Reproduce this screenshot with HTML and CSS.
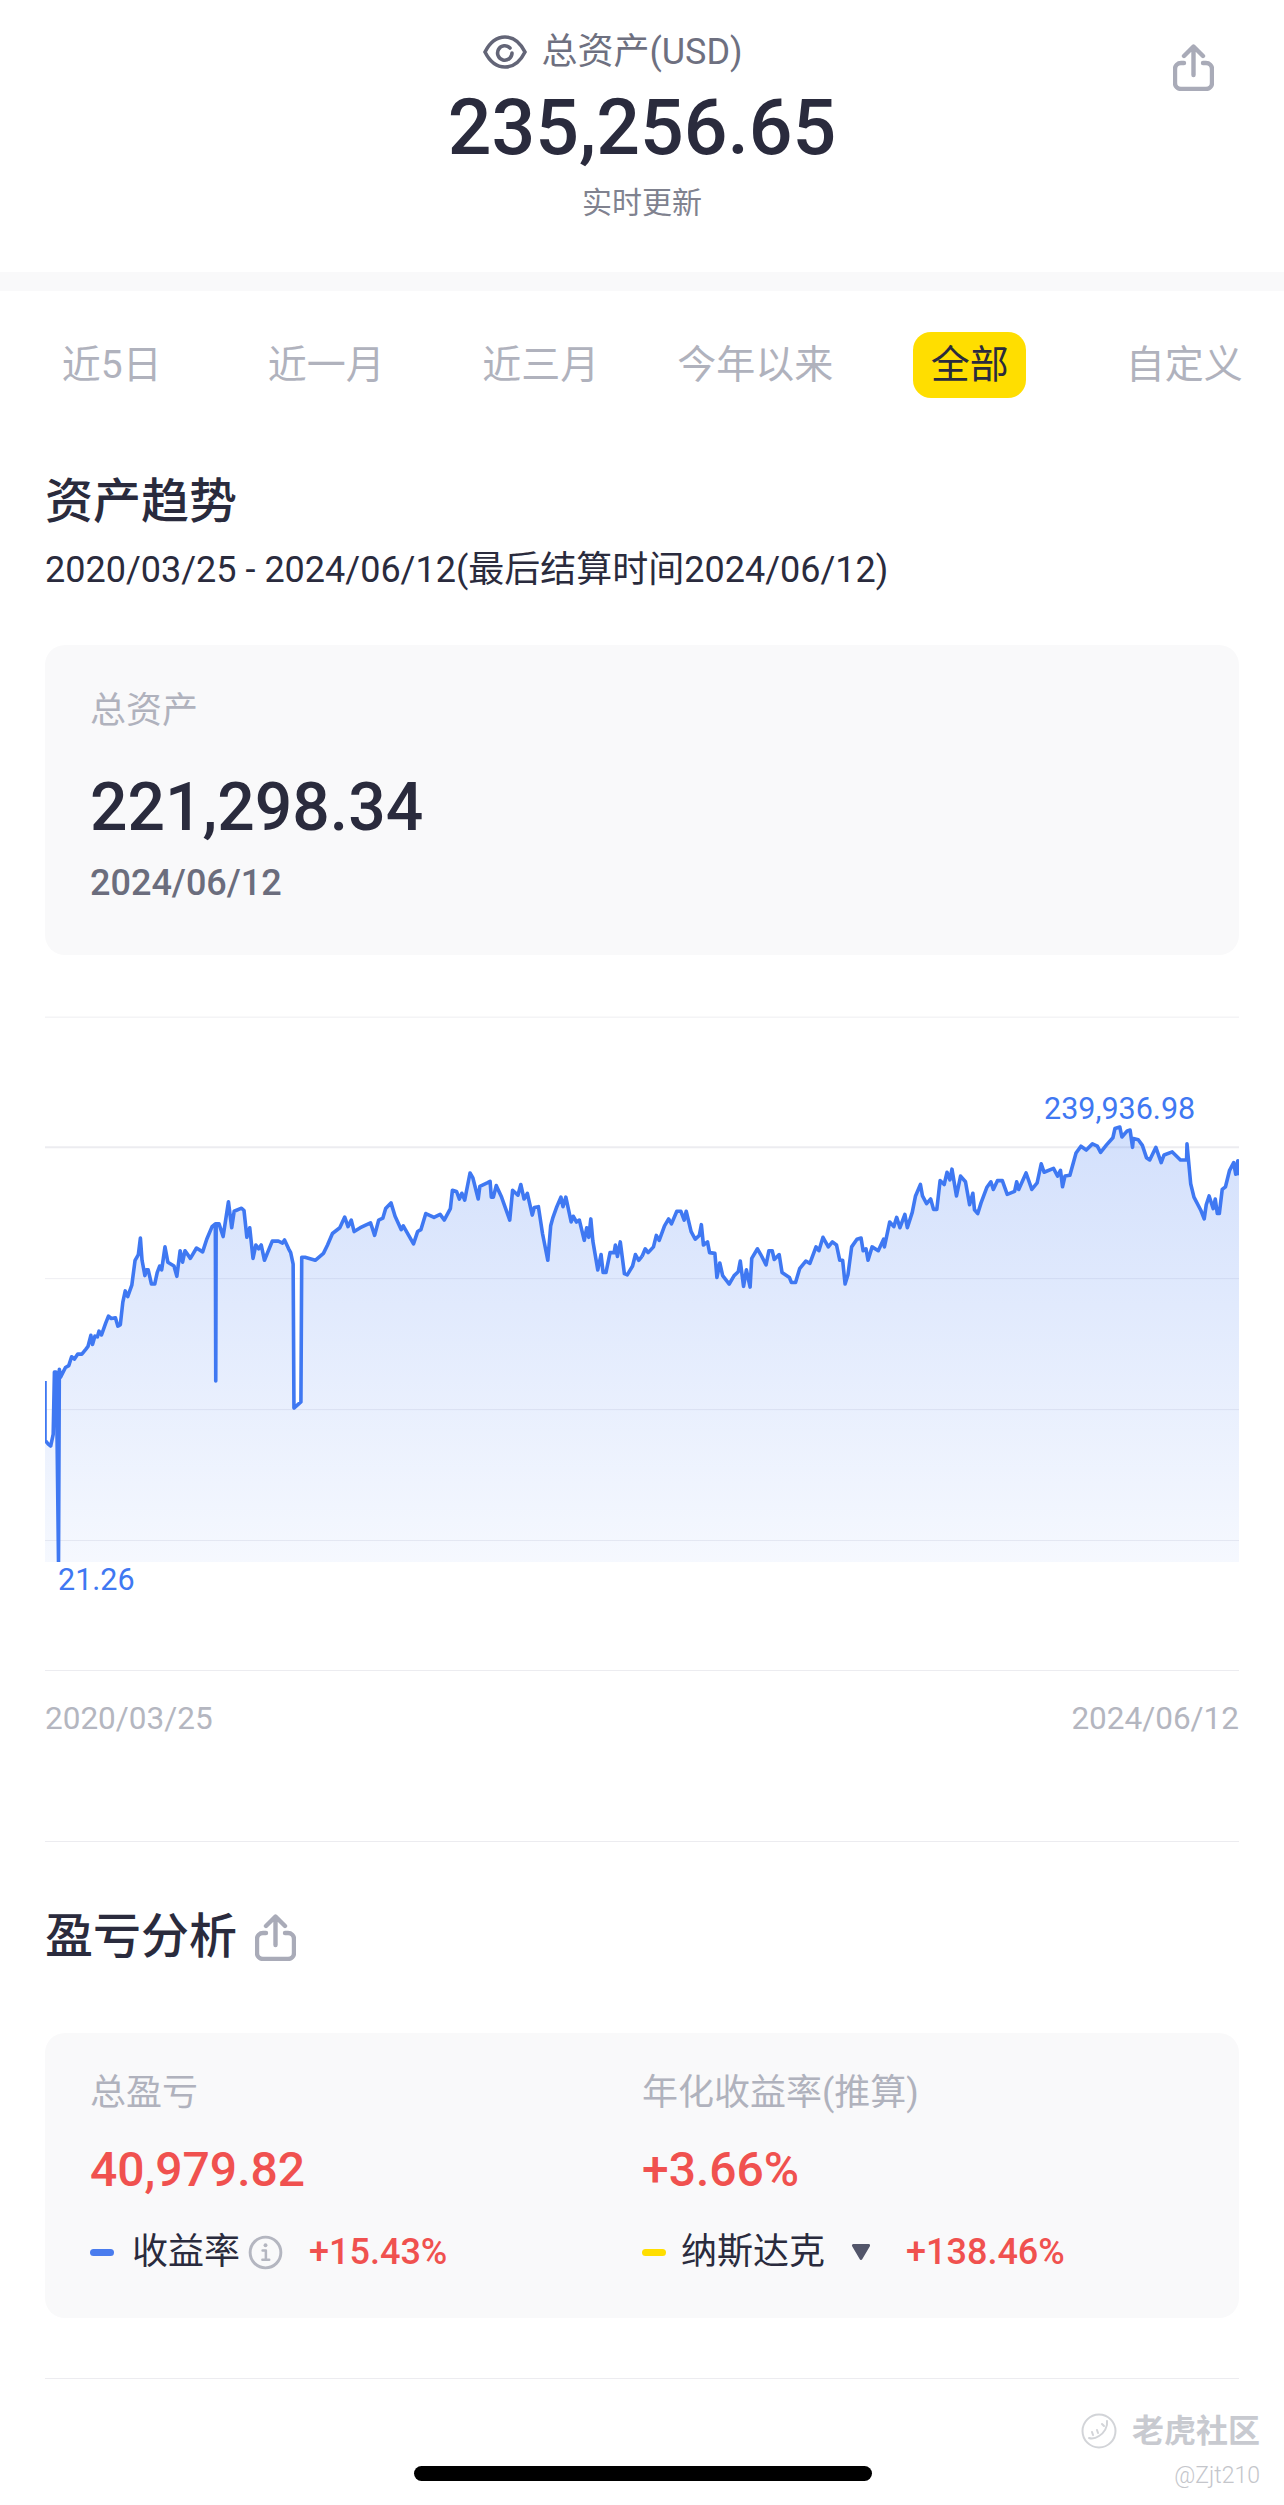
FILE: index.html
```html
<!DOCTYPE html>
<html lang="zh-CN">
<head>
    <meta charset="UTF-8">
    <meta name="viewport" content="width=device-width, initial-scale=1.0">
    <title>总资产</title>
    <link rel="stylesheet" href="styles.css">
</head>
<body>
    <div class="page">
        <!-- Total assets header -->
        <header class="header">
            <div></div>
            <div class="summary">
                <div class="summary-label">
                    <svg class="eye-icon" viewBox="0 0 44 34" fill="none" stroke="#636577" stroke-width="3.6" stroke-linecap="round">
                        <path d="M2 17C7 7 14 2 22 2s15 5 20 15c-5 10-12 15-20 15S7 27 2 17z"/>
                        <path d="M27 13a7.2 7.2 0 1 0 2 5"/>
                    </svg>
                    <span>总资产(USD)</span>
                    <span></span>
                </div>
                <div class="summary-value">235,256.65</div>
                <div class="summary-note">实时更新</div>
            </div>
            <svg class="share-icon share-top" viewBox="0 0 41 47" fill="none" stroke="#a9abb8" stroke-width="4.4" stroke-linecap="round" stroke-linejoin="round">
                <path d="M20.5 3V31M11 12l9.5-9.5L30 12"/>
                <path d="M11 19H8a6 6 0 0 0-6 6v14a6 6 0 0 0 6 6h25a6 6 0 0 0 6-6V25a6 6 0 0 0-6-6h-3"/>
            </svg>
        </header>
        <div class="band"></div>

        <!-- Time range tabs -->
        <nav class="tabs">
            <a class="tab">近5日</a>
            <a class="tab">近一月</a>
            <a class="tab">近三月</a>
            <a class="tab">今年以来</a>
            <a class="tab active">全部</a>
            <a class="tab">自定义</a>
        </nav>

        <main class="content">
            <h2 class="section-title trend-title">资产趋势</h2>
            <p class="date-range">2020/03/25 - 2024/06/12(最后结算时间2024/06/12)</p>

            <div class="card asset-card">
                <div class="card-label">总资产</div>
                <div class="asset-value">221,298.34</div>
                <div class="asset-date">2024/06/12</div>
            </div>

            <div class="chart">
                <svg class="chart-svg" viewBox="110 42 2916 1426" preserveAspectRatio="none">
                    <defs>
                        <linearGradient id="areaFill" gradientUnits="userSpaceOnUse" x1="0" y1="330" x2="0" y2="1468">
                            <stop offset="0" stop-color="#3f78f2" stop-opacity="0.23"/>
                            <stop offset="1" stop-color="#3f78f2" stop-opacity="0.05"/>
                        </linearGradient>
                    </defs>
                    <g class="grid">
                        <line x1="110" x2="3026" y1="45" y2="45"/>
                        <line class="grid-strong" x1="110" x2="3026" y1="385" y2="385"/>
                        <line x1="110" x2="3026" y1="728" y2="728"/>
                        <line x1="110" x2="3026" y1="1070" y2="1070"/>
                        <line x1="110" x2="3026" y1="1412" y2="1412"/>
                    </g>
                    <polygon class="area" points="110,1468 110,1150 118,1160 124,1165 130,1135 133,972 137,972 139,1100 143,1468 145,965 148,985 160,960 168,955 175,932 182,938 190,925 200,925 210,912 215,905 222,876 226,900 232,878 238,880 242,865 248,875 258,845 265,826 272,832 282,830 288,852 294,848 300,790 306,760 312,775 322,745 330,680 338,665 343,622 347,680 354,720 358,705 362,705 370,742 378,742 384,712 390,695 395,705 403,645 410,685 425,695 432,722 440,655 446,685 452,655 465,675 480,648 495,658 505,625 518,592 526,585 527,995 528,585 535,585 545,618 558,527 566,595 572,552 590,544 596,550 603,620 610,595 618,675 625,640 632,650 638,640 646,680 665,630 680,630 690,635 695,627 705,650 710,660 716,690 718,1066 735,1050 737,672 745,672 770,680 790,662 800,640 812,610 830,595 842,567 850,592 858,575 865,605 880,595 905,582 915,615 925,575 935,570 942,545 955,530 965,565 980,600 985,590 1010,637 1020,605 1028,600 1040,558 1060,568 1075,560 1085,575 1100,545 1105,497 1115,500 1122,520 1128,505 1135,523 1148,452 1155,465 1168,520 1172,487 1190,478 1197,474 1200,515 1205,515 1212,485 1225,515 1245,575 1252,497 1265,510 1272,482 1280,520 1288,505 1300,562 1305,542 1315,540 1325,610 1338,680 1345,590 1350,570 1360,540 1370,515 1375,540 1382,515 1395,580 1400,565 1408,580 1415,575 1427,628 1433,595 1438,620 1443,572 1448,630 1460,705 1468,665 1473,712 1480,712 1490,660 1500,660 1503,640 1508,670 1515,632 1525,715 1532,718 1545,695 1552,665 1560,680 1568,670 1568,1468"/>
                    <polyline class="line" points="110,995 110,1150 118,1160 124,1165 130,1135 133,972 137,972 139,1100 143,1468 145,965 148,985 160,960 168,955 175,932 182,938 190,925 200,925 210,912 215,905 222,876 226,900 232,878 238,880 242,865 248,875 258,845 265,826 272,832 282,830 288,852 294,848 300,790 306,760 312,775 322,745 330,680 338,665 343,622 347,680 354,720 358,705 362,705 370,742 378,742 384,712 390,695 395,705 403,645 410,685 425,695 432,722 440,655 446,685 452,655 465,675 480,648 495,658 505,625 518,592 526,585 527,995 528,585 535,585 545,618 558,527 566,595 572,552 590,544 596,550 603,620 610,595 618,675 625,640 632,650 638,640 646,680 665,630 680,630 690,635 695,627 705,650 710,660 716,690 718,1066 735,1050 737,672 745,672 770,680 790,662 800,640 812,610 830,595 842,567 850,592 858,575 865,605 880,595 905,582 915,615 925,575 935,570 942,545 955,530 965,565 980,600 985,590 1010,637 1020,605 1028,600 1040,558 1060,568 1075,560 1085,575 1100,545 1105,497 1115,500 1122,520 1128,505 1135,523 1148,452 1155,465 1168,520 1172,487 1190,478 1197,474 1200,515 1205,515 1212,485 1225,515 1245,575 1252,497 1265,510 1272,482 1280,520 1288,505 1300,562 1305,542 1315,540 1325,610 1338,680 1345,590 1350,570 1360,540 1370,515 1375,540 1382,515 1395,580 1400,565 1408,580 1415,575 1427,628 1433,595 1438,620 1443,572 1448,630 1460,705 1468,665 1473,712 1480,712 1490,660 1500,660 1503,640 1508,670 1515,632 1525,715 1532,718 1545,695 1552,665 1560,680 1568,670"/>
                    <g transform="translate(1568 0)">
                        <polygon class="area" points="0,1468 0,670 8,650 15,660 28,645 35,615 42,628 55,590 65,572 72,585 85,552 95,552 103,575 108,552 120,605 130,625 140,615 145,587 150,640 160,632 165,660 178,662 183,725 190,687 197,720 213,742 225,720 235,710 240,682 248,748 255,705 264,750 268,675 282,650 290,665 303,692 310,655 318,655 323,678 335,665 342,712 360,725 365,738 375,738 385,702 400,682 410,688 425,645 432,655 442,620 455,645 465,632 475,640 483,680 490,680 496,742 503,718 512,645 525,625 535,622 540,655 547,650 552,680 562,645 577,655 590,625 592,645 605,580 615,592 622,568 630,595 642,560 648,595 660,555 668,512 680,482 685,512 695,532 705,520 712,547 720,547 728,472 738,482 745,450 752,470 757,442 768,512 778,460 790,475 800,535 808,505 812,548 820,558 828,530 842,490 852,475 858,495 868,472 880,472 892,508 910,500 915,475 920,495 938,452 952,495 965,478 975,428 982,450 1005,440 1015,460 1022,445 1027,488 1033,460 1045,458 1060,400 1072,382 1085,392 1100,376 1112,382 1120,398 1135,378 1150,360 1155,336 1167,332 1172,358 1185,342 1192,340 1198,385 1200,362 1212,365 1222,380 1232,412 1240,418 1255,385 1268,425 1275,405 1295,397 1315,418 1330,418 1331,376 1340,480 1348,515 1365,550 1373,572 1378,535 1385,512 1395,545 1400,520 1405,558 1410,558 1417,495 1425,488 1435,445 1445,425 1450,455 1455,420 1458,458 1458,1468"/>
                        <polyline class="line" points="0,670 8,650 15,660 28,645 35,615 42,628 55,590 65,572 72,585 85,552 95,552 103,575 108,552 120,605 130,625 140,615 145,587 150,640 160,632 165,660 178,662 183,725 190,687 197,720 213,742 225,720 235,710 240,682 248,748 255,705 264,750 268,675 282,650 290,665 303,692 310,655 318,655 323,678 335,665 342,712 360,725 365,738 375,738 385,702 400,682 410,688 425,645 432,655 442,620 455,645 465,632 475,640 483,680 490,680 496,742 503,718 512,645 525,625 535,622 540,655 547,650 552,680 562,645 577,655 590,625 592,645 605,580 615,592 622,568 630,595 642,560 648,595 660,555 668,512 680,482 685,512 695,532 705,520 712,547 720,547 728,472 738,482 745,450 752,470 757,442 768,512 778,460 790,475 800,535 808,505 812,548 820,558 828,530 842,490 852,475 858,495 868,472 880,472 892,508 910,500 915,475 920,495 938,452 952,495 965,478 975,428 982,450 1005,440 1015,460 1022,445 1027,488 1033,460 1045,458 1060,400 1072,382 1085,392 1100,376 1112,382 1120,398 1135,378 1150,360 1155,336 1167,332 1172,358 1185,342 1192,340 1198,385 1200,362 1212,365 1222,380 1232,412 1240,418 1255,385 1268,425 1275,405 1295,397 1315,418 1330,418 1331,376 1340,480 1348,515 1365,550 1373,572 1378,535 1385,512 1395,545 1400,520 1405,558 1410,558 1417,495 1425,488 1435,445 1445,425 1450,455 1455,420 1458,458"/>
                    </g>
                </svg>
                <span class="chart-label label-high">239,936.98</span>
                <span class="chart-label label-low">21.26</span>
            </div>
            <div class="axis">
                <span>2020/03/25</span>
                <span>2024/06/12</span>
            </div>
            <hr class="divider first-divider">

            <!-- Profit and loss -->
            <h2 class="section-title pnl-title">
                盈亏分析
                <svg class="share-icon" viewBox="0 0 41 47" fill="none" stroke="#a9abb8" stroke-width="4.4" stroke-linecap="round" stroke-linejoin="round">
                    <path d="M20.5 3V31M11 12l9.5-9.5L30 12"/>
                    <path d="M11 19H8a6 6 0 0 0-6 6v14a6 6 0 0 0 6 6h25a6 6 0 0 0 6-6V25a6 6 0 0 0-6-6h-3"/>
                </svg>
            </h2>

            <div class="card pnl-card">
                <div class="pnl-col">
                    <div class="card-label">总盈亏</div>
                    <div class="pnl-value">40,979.82</div>
                    <div class="pnl-row">
                        <i class="dash dash-blue"></i>
                        <span class="pnl-name">收益率</span>
                        <svg class="info-icon" viewBox="0 0 36 36" fill="none" stroke="#b4b6c0">
                            <circle cx="18" cy="18" r="15.8" stroke-width="3"/>
                            <path d="M15 16h3.4v9.5M14.8 25.5h7" stroke-width="2.6" stroke-linecap="round" stroke-linejoin="round"/>
                            <circle cx="18" cy="10.5" r="2" fill="#b4b6c0" stroke="none"/>
                        </svg>
                        <span class="pnl-pct pct-left">+15.43%</span>
                    </div>
                </div>
                <div class="pnl-col">
                    <div class="card-label">年化收益率(推算)</div>
                    <div class="pnl-value">+3.66%</div>
                    <div class="pnl-row">
                        <i class="dash dash-yellow"></i>
                        <span class="pnl-name">纳斯达克</span>
                        <svg class="caret" viewBox="0 0 17 15">
                            <path d="M2 2h13L8.5 13z" fill="#53566a" stroke="#53566a" stroke-width="2.4" stroke-linejoin="round"/>
                        </svg>
                        <span class="pnl-pct pct-right">+138.46%</span>
                    </div>
                </div>
            </div>
            <hr class="divider last-divider">
        </main>

        <!-- Overlays: community watermark and home indicator -->
        <div class="watermark">
            <div class="watermark-brand">
                <svg class="watermark-logo" viewBox="0 0 36 36" fill="none" stroke="#d2d4d8" stroke-width="2">
                    <circle cx="18" cy="18" r="16.5"/>
                    <path d="M26 8c1 6-3 12-8 15-3 2-7 3-10 2M11 19l1 3M16 17l1 3M21 11l2 2" stroke-linecap="round"/>
                </svg>
                <span>老虎社区</span>
            </div>
            <div class="watermark-user">@Zjt210</div>
        </div>
        <div class="home-bar"></div>
    </div>
</body>
</html>
```

FILE: styles.css
```css
* {
    margin: 0;
    padding: 0;
    box-sizing: border-box;
}

body {
    font-family: Roboto, "Noto Sans CJK SC", sans-serif;
    background-color: #fff;
    color: #2a2b3d;
}

.page {
    position: relative;
    width: 1284px;
    height: 2505px;
    overflow: hidden;
}

/* Header */
.header {
    display: grid;
    grid-template-columns: 1fr auto 1fr;
    height: 272px;
}

.summary {
    display: flex;
    flex-direction: column;
    align-items: center;
    padding-top: 30px;
}

.summary-label {
    display: grid;
    grid-template-columns: 1fr auto 1fr;
    align-items: center;
    width: 100%;
    font-size: 36px;
    line-height: 44px;
    color: #6e7080;
    column-gap: 14px;
}

.summary-label span {
    min-width: 0;
}

.eye-icon {
    width: 44px;
    height: 34px;
    justify-self: end;
}

.summary-value {
    margin-top: 9px;
    font-size: 77px;
    line-height: 90px;
    font-weight: 500;
}

.summary-note {
    margin-top: 10px;
    font-size: 30px;
    line-height: 40px;
    color: #80828f;
}

.share-icon {
    width: 41px;
    height: 47px;
}

.share-top {
    justify-self: end;
    margin: 44px 70px 0 0;
}

.band {
    height: 19px;
    background-color: #f9f9fa;
}

/* Tabs */
.tabs {
    display: grid;
    grid-template-columns: repeat(6, 214.5px);
    padding: 41px 0 0 4.5px;
}

.tab {
    justify-self: center;
    padding: 0 17px;
    font-size: 39px;
    line-height: 66px;
    color: #b0b2bd;
    white-space: nowrap;
}

.tab.active {
    padding: 0 17.5px;
    background-color: #ffde00;
    border-radius: 18px;
    color: #2a2b3d;
}

/* Content */
.content {
    padding: 0 45px;
}

.section-title {
    font-size: 48px;
    line-height: 60px;
    font-weight: 500;
}

.trend-title {
    margin-top: 74px;
}

.date-range {
    margin-top: 16px;
    font-size: 36px;
    line-height: 44px;
}

.card {
    background-color: #f9f9fa;
    border-radius: 20px;
}

.asset-card {
    height: 310px;
    margin-top: 53px;
    padding: 44px 45px 0;
}

.card-label {
    font-size: 36px;
    line-height: 44px;
    color: #b0b2bd;
}

.asset-value {
    margin-top: 35px;
    font-size: 66px;
    line-height: 80px;
    font-weight: 500;
}

.asset-date {
    margin-top: 13px;
    font-size: 36px;
    line-height: 44px;
    font-weight: 500;
    color: #6b6d7d;
}

/* Chart */
.chart {
    position: relative;
    height: 654px;
    margin-top: 61px;
}

.chart-svg {
    display: block;
    width: 1194px;
    height: 546px;
}

.grid line {
    stroke: #eeeef2;
    stroke-width: 1px;
    vector-effect: non-scaling-stroke;
}

.grid .grid-strong {
    stroke: #ececf0;
    stroke-width: 2px;
}

.area {
    fill: url(#areaFill);
}

.line {
    fill: none;
    stroke: #3f78f2;
    stroke-width: 3.6px;
    stroke-linejoin: round;
    vector-effect: non-scaling-stroke;
}

.chart-label {
    position: absolute;
    font-size: 30.5px;
    line-height: 36px;
    color: #3f78f2;
}

.label-high {
    top: 75px;
    left: 999px;
}

.label-low {
    top: 546px;
    left: 13px;
}

.axis {
    display: flex;
    justify-content: space-between;
    padding-top: 28px;
    border-top: 1px solid #ececf0;
    font-size: 31.5px;
    line-height: 40px;
    color: #b4b6c0;
}

.divider {
    border: 0;
    border-top: 1px solid #ececf0;
}

.first-divider {
    margin-top: 102px;
}

/* Profit and loss */
.pnl-title {
    display: flex;
    align-items: center;
    gap: 18px;
    margin-top: 65px;
}

.pnl-card {
    display: grid;
    grid-template-columns: 552px 1fr;
    height: 285px;
    margin-top: 66px;
    padding: 38px 0 0 45px;
}

.pnl-value {
    margin-top: 25px;
    font-size: 48px;
    line-height: 60px;
    font-weight: 500;
    color: #f0514f;
}

.pnl-row {
    display: flex;
    align-items: center;
    height: 44px;
    margin-top: 30px;
}

.dash {
    width: 24px;
    height: 7px;
    margin-right: 18px;
    border-radius: 4px;
}

.dash-blue {
    background-color: #4a7cee;
}

.dash-yellow {
    margin-right: 15px;
    background-color: #ffde00;
}

.pnl-name {
    font-size: 36px;
    line-height: 44px;
}

.info-icon {
    width: 35px;
    height: 35px;
    margin-left: 8px;
}

.caret {
    width: 20px;
    height: 18px;
    margin-left: 26px;
}

.pnl-pct {
    font-size: 36px;
    font-weight: 500;
    color: #f0514f;
}

.pct-left {
    margin-left: 26px;
}

.pct-right {
    margin-left: 35px;
}

.last-divider {
    margin-top: 60px;
}

/* Overlays */
.watermark {
    position: absolute;
    top: 2410px;
    right: 24px;
    text-align: right;
}

.watermark-brand {
    display: flex;
    align-items: center;
    gap: 15px;
    font-size: 32px;
    line-height: 42px;
    font-weight: 700;
    color: #c8cad0;
}

.watermark-logo {
    width: 36px;
    height: 36px;
}

.watermark-user {
    margin-top: 9px;
    font-size: 23px;
    line-height: 30px;
    font-weight: 300;
    color: #c4c6cb;
}

.home-bar {
    position: absolute;
    top: 2466px;
    left: 414px;
    width: 458px;
    height: 15px;
    background-color: #000;
    border-radius: 8px;
}
```
